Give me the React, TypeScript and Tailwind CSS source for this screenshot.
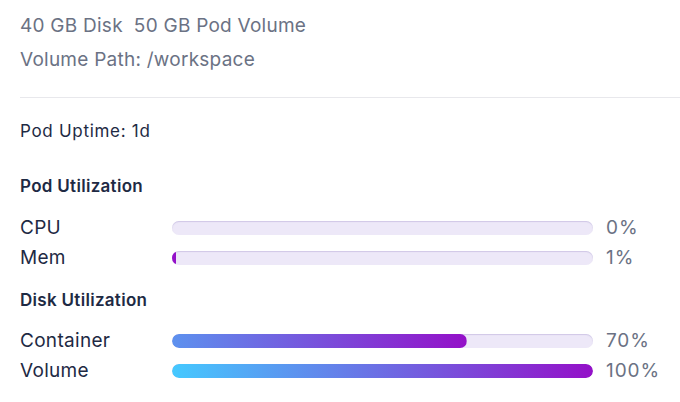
import React from "react";

type Metric = { label: string; value: number };

const podMetrics: Metric[] = [
  { label: "CPU", value: 0 },
  { label: "Mem", value: 1 },
];

const diskMetrics: Metric[] = [
  { label: "Container", value: 70 },
  { label: "Volume", value: 100 },
];

function UsageBar({ label, value }: Metric) {
  return (
    <div className="flex items-center h-[30px]">
      <span className="w-[152px] text-[19px] tracking-[0.3px] text-[#1e2a44]">{label}</span>
      <div className="relative h-[14px] w-[421px] rounded-full bg-[#ede8f8] shadow-[inset_0_1px_1px_rgba(120,100,180,0.25)] overflow-hidden">
        {value > 0 && (
          <div
            className="h-full rounded-full bg-[linear-gradient(to_right,#45c9ff,#9410c8)] bg-right bg-no-repeat"
            style={{
              width: `${Math.max(value, 1)}%`,
              backgroundSize: `${(100 / Math.max(value, 1)) * 100}% 100%`,
            }}
          />
        )}
      </div>
      <span className="ml-[13px] text-[19px] tracking-[0.9px] text-[#6b7284]">{value}%</span>
    </div>
  );
}

export default function App() {
  return (
    <div className="w-[680px] h-[402px] bg-white overflow-hidden font-['Inter',sans-serif] pl-[20px]">
      {/* Volume info */}
      <div className="pt-[9px] pb-[20px] text-[19px] tracking-[0.25px] text-[#6b7284] leading-[34px]">
        <div className="flex gap-[11px]">
          <span>40 GB Disk</span>
          <span>50 GB Pod Volume</span>
        </div>
        <div>Volume Path: /workspace</div>
      </div>

      <div className="h-px bg-[#e8e8ec]" />

      <p className="mt-[21px] text-[17px] leading-[24px] tracking-[0.7px] text-[#1e2a44]">Pod Uptime: 1d</p>

      {/* Pod utilization */}
      <h3 className="mt-[31px] mb-[15px] text-[17px] leading-[24px] tracking-[0.3px] font-semibold text-[#1e2a44]">Pod Utilization</h3>
      {podMetrics.map((m) => (
        <UsageBar key={m.label} {...m} />
      ))}

      {/* Disk utilization */}
      <h3 className="mt-[15px] mb-[14px] text-[17px] leading-[24px] tracking-[0.3px] font-semibold text-[#1e2a44]">Disk Utilization</h3>
      {diskMetrics.map((m) => (
        <UsageBar key={m.label} {...m} />
      ))}
    </div>
  );
}
